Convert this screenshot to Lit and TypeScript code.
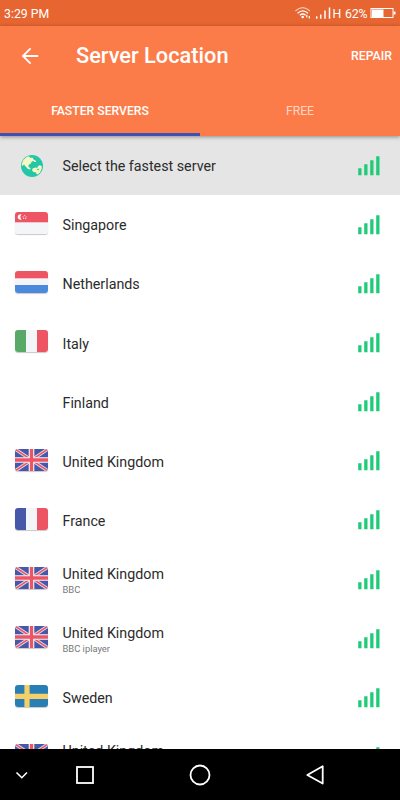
import {LitElement, html, css, svg} from 'lit';
import {customElement, property} from 'lit/decorators.js';

interface Server {
  flag: string;
  name: string;
  note?: string;
}

const SERVERS: Server[] = [
  {flag: 'globe', name: 'Select the fastest server'},
  {flag: 'sg', name: 'Singapore'},
  {flag: 'nl', name: 'Netherlands'},
  {flag: 'it', name: 'Italy'},
  {flag: '', name: 'Finland'},
  {flag: 'gb', name: 'United Kingdom'},
  {flag: 'fr', name: 'France'},
  {flag: 'gb', name: 'United Kingdom', note: 'BBC'},
  {flag: 'gb', name: 'United Kingdom', note: 'BBC iplayer'},
  {flag: 'se', name: 'Sweden'},
  {flag: 'gb', name: 'United Kingdom', note: '\u00a0'},
];

// every flag is drawn on a 33x22 field
const FLAGS: Record<string, unknown> = {
  sg: svg`
    <rect width="33" height="22" fill="#f4f5f9" />
    <rect width="33" height="10.3" fill="#ed5565" />
    <path d="M6.6 2.6 A2.7 2.7 0 1 0 6.6 7.4 A2.9 2.9 0 0 1 6.6 2.6Z" fill="#fff" />
    <g fill="#fbd5da">
      <circle cx="9.6" cy="3.6" r=".65" />
      <circle cx="8.1" cy="4.8" r=".65" />
      <circle cx="11.1" cy="4.8" r=".65" />
      <circle cx="8.6" cy="6.4" r=".65" />
      <circle cx="10.6" cy="6.4" r=".65" />
    </g>`,
  nl: svg`
    <rect width="33" height="22" fill="#f4f5f9" />
    <rect width="33" height="7.3" fill="#ed5565" />
    <rect y="14" width="33" height="8" fill="#4a89dc" />`,
  it: svg`
    <rect width="33" height="22" fill="#f4f5f9" />
    <rect width="11" height="22" fill="#58a868" />
    <rect x="22" width="11" height="22" fill="#ed5565" />`,
  fr: svg`
    <rect width="33" height="22" fill="#f4f5f9" />
    <rect width="11" height="22" fill="#4758a9" />
    <rect x="22" width="11" height="22" fill="#ed5565" />`,
  gb: svg`
    <rect width="33" height="22" fill="#4758a9" />
    <path d="M0 0 L33 22 M33 0 L0 22" stroke="#dfe0ee" stroke-width="3.3" />
    <path d="M0 0 L33 22 M33 0 L0 22" stroke="#ed5565" stroke-width="1.5" />
    <path d="M16.5 0 V22 M0 11 H33" stroke="#f4f5f9" stroke-width="5.6" />
    <path d="M16.5 0 V22 M0 11 H33" stroke="#ed5565" stroke-width="3.3" />`,
  se: svg`
    <rect width="33" height="22" fill="#277fb5" />
    <path d="M12 0 V22 M0 11.3 H33" stroke="#f5d06a" stroke-width="5.2" />`,
};

@customElement('server-flag')
export class ServerFlag extends LitElement {
  @property({type: String})
  code: string = '';

  static override styles = css`
    :host {
      display: flex;
      width: 33px;
      height: 22px;
      align-items: center;
      justify-content: center;
    }

    svg {
      display: block;
      flex: none;
    }

    .flag {
      border-radius: 3px;
      box-shadow: 0 1px 1px rgba(0, 0, 0, 0.22);
    }
  `;

  override render() {
    if (this.code === 'globe') {
      return html`
        <svg class="globe" width="22" height="22" viewBox="0 0 22 22">
          <circle cx="11" cy="11" r="11" fill="#25c6a8" />
          <g fill="#f4f8c4">
            <path
              d="M.6 9.8 L2.2 5.2 L4.4 3 L6.4 1.6 L8.4 1.6 L9.4 3 L11.4 2.6 L12.6 4.4 L14.6 5.4 L15.2 7 L13.4 7 L12.4 6 L10.8 6.6 L9.8 8.6 L7.8 9.8 L7.4 11.8 L9.4 13 L9.4 14.6 L7 14 L4.6 11.4 L3 9.6 L1.4 11Z"
            />
            <path
              d="M11.6 13.4 L14.4 12.4 L16 13 L17.2 11 L18.6 10.2 L20.8 11 L20.6 14 L19 17.4 L16.6 19.4 L15.4 19 L15.2 17.4 L12.4 17 L11 15.2Z"
            />
          </g>
          <path d="M15.6 14.4 L18.4 13.4 L17.4 15.4Z" fill="#25c6a8" />
        </svg>
      `;
    }
    if (!FLAGS[this.code]) {
      return html``;
    }
    return html`
      <svg class="flag" width="33" height="22" viewBox="0 0 33 22">
        ${FLAGS[this.code]}
      </svg>
    `;
  }
}

@customElement('app-root')
export class AppRoot extends LitElement {
  static override styles = css`
    :host {
      display: flex;
      flex-direction: column;
      width: 400px;
      height: 800px;
      overflow: hidden;
      background: #fff;
      color: #2b2b2b;
      font-family: Roboto, 'Liberation Sans', sans-serif;
    }

    svg {
      display: block;
      flex: none;
    }

    .status {
      display: flex;
      flex: none;
      align-items: center;
      height: 26px;
      padding: 0 4px;
      box-sizing: border-box;
      background: #e66531;
      color: #fff;
      font-size: 12.3px;
      white-space: nowrap;
    }

    .time {
      flex: 1;
      padding-top: 1px;
    }

    .top {
      flex: none;
      height: 110px;
      background: #fc7c49;
      color: #fff;
      box-shadow: 0 1px 4px rgba(0, 0, 0, 0.4);
      z-index: 1;
    }

    .bar {
      display: flex;
      align-items: center;
      height: 60px;
      padding: 0 8px 0 21px;
    }

    .title {
      flex: 1;
      margin: 0 0 0 37px;
      font-size: 21.75px;
      line-height: 28px;
      font-weight: 500;
    }

    .action {
      font-size: 12.3px;
      font-weight: 500;
    }

    .tabs {
      display: grid;
      grid-template-columns: 1fr 1fr;
      height: 50px;
    }

    .tab {
      display: flex;
      align-items: center;
      justify-content: center;
      padding-top: 2px;
      border-bottom: 3px solid transparent;
      font-size: 12.2px;
      color: rgba(255, 255, 255, 0.7);
    }

    .tab.active {
      border-color: #3f51b5;
      color: #fff;
      font-weight: 500;
    }

    .list {
      flex: 1;
      min-height: 0;
      overflow: hidden;
    }

    .row {
      display: flex;
      align-items: center;
      height: 59.15px;
      padding: 0 20px 0 15px;
      box-sizing: border-box;
    }

    .row.selected {
      background: #e5e5e5;
    }

    server-flag {
      flex: none;
      margin-bottom: 3px;
    }

    .selected server-flag {
      margin-bottom: 0;
    }

    .label {
      flex: 1;
      margin-left: 14.5px;
      padding-top: 1.2px;
    }

    .name {
      font-size: 14.28px;
      line-height: 18px;
    }

    .note {
      font-size: 9.4px;
      line-height: 13px;
      color: #777;
    }

    .nav {
      display: flex;
      flex: none;
      align-items: center;
      height: 51px;
      background: #000;
    }
  `;

  renderRow(server: Server, index: number) {
    return html`
      <div class=${index === 0 ? 'row selected' : 'row'}>
        <server-flag code=${server.flag}></server-flag>
        <div class="label">
          <div class="name">${server.name}</div>
          ${server.note ? html`<div class="note">${server.note}</div>` : ''}
        </div>
        <svg width="22" height="20" viewBox="0 0 22 20">
          <path
            d="M.2 12.2 H3.5 V19.3 H.2Z M6.2 8.2 H9.5 V19.3 H6.2Z M12.2 4.2 H15.5 V19.3 H12.2Z M18.2 .2 H21.5 V19.3 H18.2Z"
            fill="#1fcb78"
          />
        </svg>
      </div>
    `;
  }

  override render() {
    return html`
      <div class="status">
        <span class="time">3:29 PM</span>
        <svg width="104" height="26" viewBox="0 0 104 26" fill="none">
          <g stroke="#fff" stroke-width="1.2">
            <path d="M3.4 11 Q10.7 4.2 18 11" opacity=".65" />
            <path d="M5.5 13.2 Q10.7 8.4 16 13.2" />
            <path d="M7.8 15.3 Q10.7 12.7 13.6 15.3" />
          </g>
          <circle cx="10.7" cy="17" r="1.3" fill="#fff" />
          <path d="M14.8 14.8 V17.4 M17.3 16 V18.6" stroke="#fff" stroke-width="1.2" />
          <path
            d="M24.7 16.2 V18.8 M28.7 14.4 V18.8 M33 10.6 V18.8 M37.5 7.4 V18.8"
            stroke="#fff"
            stroke-width="1.5"
          />
          <text x="40.6" y="17.8" fill="#fff" font-size="12.3">H</text>
          <text x="53" y="17.8" fill="#fff" font-size="12.3" textLength="22.5">62%</text>
          <rect x="79" y="8.5" width="22" height="9" stroke="#fff" />
          <rect x="80" y="9.5" width="11.5" height="7.5" fill="#fff" />
          <rect x="101.5" y="11.5" width="2" height="3" fill="#fff" />
        </svg>
      </div>
      <div class="top">
        <div class="bar">
          <svg width="18" height="18" viewBox="0 0 18 18" fill="none" stroke="#fff" stroke-width="1.8">
            <path d="M17.2 9 H2 M9.6 1.3 L1.9 9 L9.6 16.7" />
          </svg>
          <h1 class="title">Server Location</h1>
          <span class="action">REPAIR</span>
        </div>
        <div class="tabs">
          <div class="tab active">FASTER SERVERS</div>
          <div class="tab">FREE</div>
        </div>
      </div>
      <div class="list">${SERVERS.map((s, i) => this.renderRow(s, i))}</div>
      <div class="nav">
        <svg width="400" height="51" viewBox="0 0 400 51" fill="none" stroke="#fff">
          <path d="M16.5 23.5 L21.8 28.7 L27 23.5" stroke-width="1.6" />
          <rect x="77" y="18" width="16" height="16" stroke-width="1.8" />
          <circle cx="200" cy="26" r="9.5" stroke-width="1.8" />
          <path d="M322.7 17.3 V34.5 L307.3 26Z" stroke-width="1.8" stroke-linejoin="round" />
        </svg>
      </div>
    `;
  }
}
